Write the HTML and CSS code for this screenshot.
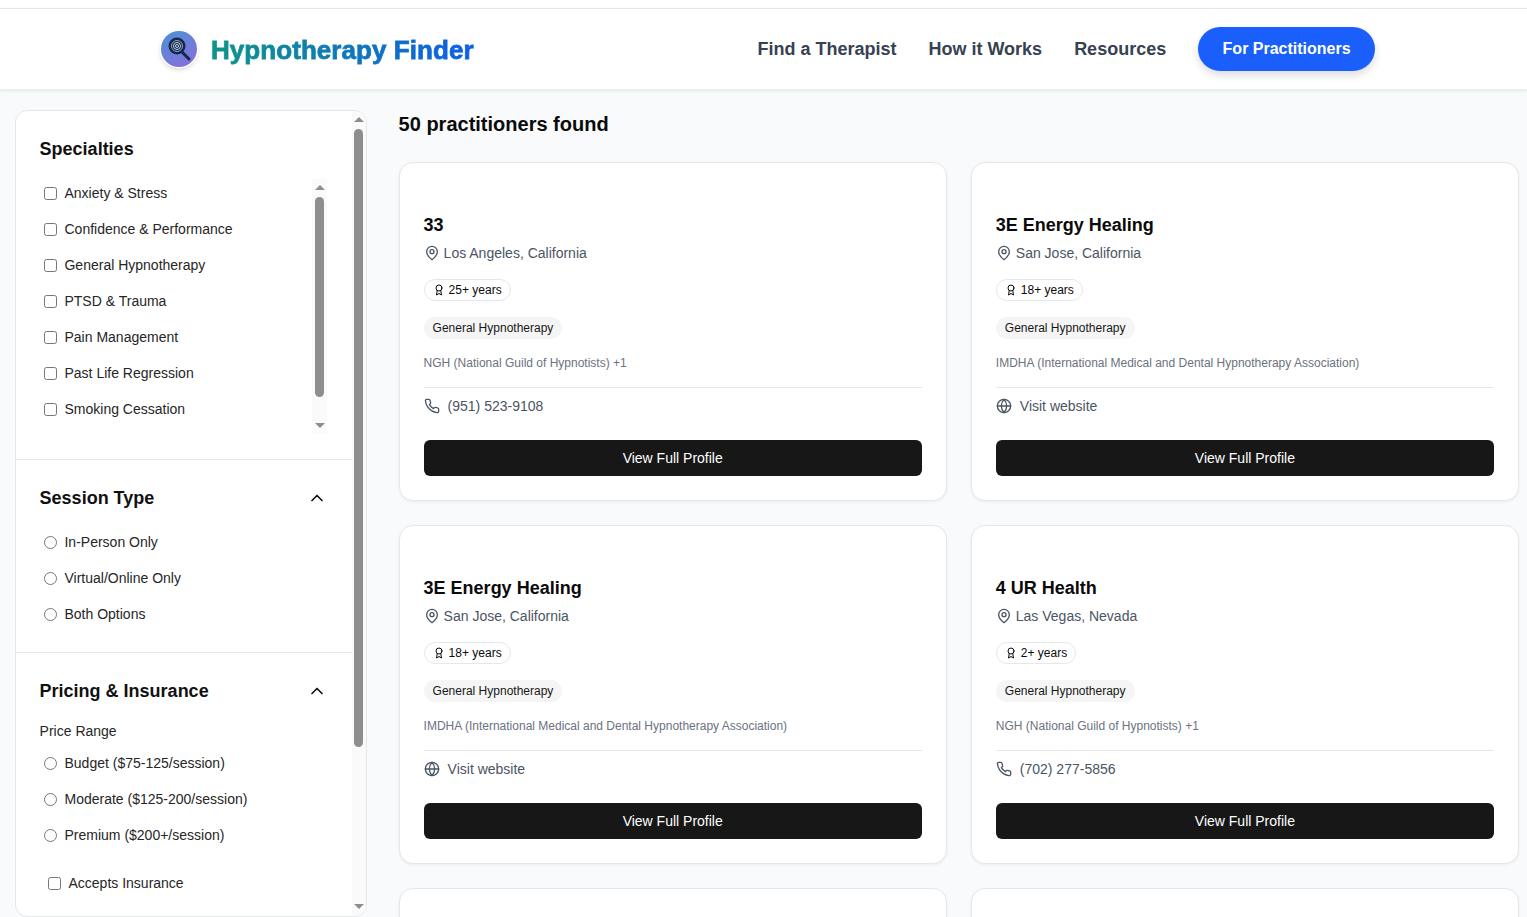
FILE: index.html
```html
<!DOCTYPE html>
<html lang="en">
<head>
    <meta charset="UTF-8">
    <meta name="viewport" content="width=device-width, initial-scale=1.0">
    <title>Hypnotherapy Finder</title>
    <link rel="stylesheet" href="styles.css">
</head>
<body>
    <svg class="icon-defs" width="0" height="0">
        <symbol id="i-pin" viewBox="0 0 24 24"><path d="M20 10c0 6-8 12-8 12s-8-6-8-12a8 8 0 0 1 16 0Z"/><circle cx="12" cy="10" r="3"/></symbol>
        <symbol id="i-award" viewBox="0 0 24 24"><circle cx="12" cy="8" r="6"/><path d="M15.477 12.89 17 22l-5-3-5 3 1.523-9.11"/></symbol>
        <symbol id="i-phone" viewBox="0 0 24 24"><path d="M22 16.92v3a2 2 0 0 1-2.18 2 19.79 19.79 0 0 1-8.63-3.07 19.5 19.5 0 0 1-6-6 19.79 19.79 0 0 1-3.07-8.67A2 2 0 0 1 4.11 2h3a2 2 0 0 1 2 1.72 12.84 12.84 0 0 0 .7 2.81 2 2 0 0 1-.45 2.11L8.09 9.91a16 16 0 0 0 6 6l1.27-1.27a2 2 0 0 1 2.11-.45 12.84 12.84 0 0 0 2.81.7A2 2 0 0 1 22 16.92z"/></symbol>
        <symbol id="i-globe" viewBox="0 0 24 24"><circle cx="12" cy="12" r="10"/><path d="M2 12h20"/><path d="M12 2a15.3 15.3 0 0 1 4 10 15.3 15.3 0 0 1-4 10 15.3 15.3 0 0 1-4-10 15.3 15.3 0 0 1 4-10z"/></symbol>
        <symbol id="i-chevron" viewBox="0 0 24 24"><path d="m18 15-6-6-6 6"/></symbol>
    </svg>

    <header class="site-header">
        <div class="header-inner">
            <a class="logo" href="#">
                <span class="logo-badge">
                    <svg viewBox="0 0 36 36" width="36" height="36">
                        <line x1="21" y1="21" x2="28" y2="28" stroke="#14284b" stroke-width="3" stroke-linecap="round"/>
                        <circle cx="16" cy="15" r="8.5" fill="#14284b"/>
                        <circle cx="16" cy="15" r="5.5" fill="none" stroke="#8fa6c8" stroke-width="1"/>
                        <circle cx="16" cy="15" r="3.5" fill="none" stroke="#c3d0e3" stroke-width="1"/>
                        <circle cx="16" cy="15" r="1.5" fill="none" stroke="#c3d0e3" stroke-width="1"/>
                    </svg>
                </span>
                <span class="logo-text">Hypnotherapy Finder</span>
            </a>
            <nav class="main-nav">
                <a href="#">Find a Therapist</a>
                <a href="#">How it Works</a>
                <a href="#">Resources</a>
                <a class="nav-cta" href="#">For Practitioners</a>
            </nav>
        </div>
    </header>

    <div class="page">
        <aside class="sidebar">
            <section class="filter-group">
                <div class="filter-head"><h3>Specialties</h3></div>
                <div class="specialty-list">
                    <label class="option"><input type="checkbox"> Anxiety &amp; Stress</label>
                    <label class="option"><input type="checkbox"> Confidence &amp; Performance</label>
                    <label class="option"><input type="checkbox"> General Hypnotherapy</label>
                    <label class="option"><input type="checkbox"> PTSD &amp; Trauma</label>
                    <label class="option"><input type="checkbox"> Pain Management</label>
                    <label class="option"><input type="checkbox"> Past Life Regression</label>
                    <label class="option"><input type="checkbox"> Smoking Cessation</label>
                    <div class="scrollbar scrollbar-inner">
                        <span class="arrow-up"></span>
                        <span class="thumb"></span>
                        <span class="arrow-down"></span>
                    </div>
                </div>
            </section>

            <section class="filter-group session-group">
                <div class="filter-head">
                    <h3>Session Type</h3>
                    <svg class="icon chevron"><use href="#i-chevron"/></svg>
                </div>
                <div class="option-list">
                    <label class="option"><input type="radio" name="session"> In-Person Only</label>
                    <label class="option"><input type="radio" name="session"> Virtual/Online Only</label>
                    <label class="option"><input type="radio" name="session"> Both Options</label>
                </div>
            </section>

            <section class="filter-group pricing-group">
                <div class="filter-head">
                    <h3>Pricing &amp; Insurance</h3>
                    <svg class="icon chevron"><use href="#i-chevron"/></svg>
                </div>
                <div class="price-label">Price Range</div>
                <label class="option"><input type="radio" name="price"> Budget ($75-125/session)</label>
                <label class="option"><input type="radio" name="price"> Moderate ($125-200/session)</label>
                <label class="option"><input type="radio" name="price"> Premium ($200+/session)</label>
                <label class="option insurance"><input type="checkbox"> Accepts Insurance</label>
            </section>

            <div class="scrollbar scrollbar-outer">
                <span class="arrow-up"></span>
                <span class="thumb"></span>
                <span class="arrow-down"></span>
            </div>
        </aside>

        <main class="results">
            <h2 class="results-count">50 practitioners found</h2>
            <div class="card-grid">
                <article class="card">
                    <h3 class="card-name">33</h3>
                    <div class="card-location"><svg class="icon"><use href="#i-pin"/></svg>Los Angeles, California</div>
                    <span class="badge"><svg class="icon"><use href="#i-award"/></svg>25+ years</span>
                    <div><span class="tag">General Hypnotherapy</span></div>
                    <p class="card-cert">NGH (National Guild of Hypnotists) +1</p>
                    <div class="card-contact"><svg class="icon"><use href="#i-phone"/></svg>(951) 523-9108</div>
                    <a class="profile-btn" href="#">View Full Profile</a>
                </article>
                <article class="card">
                    <h3 class="card-name">3E Energy Healing</h3>
                    <div class="card-location"><svg class="icon"><use href="#i-pin"/></svg>San Jose, California</div>
                    <span class="badge"><svg class="icon"><use href="#i-award"/></svg>18+ years</span>
                    <div><span class="tag">General Hypnotherapy</span></div>
                    <p class="card-cert">IMDHA (International Medical and Dental Hypnotherapy Association)</p>
                    <div class="card-contact"><svg class="icon"><use href="#i-globe"/></svg>Visit website</div>
                    <a class="profile-btn" href="#">View Full Profile</a>
                </article>
                <article class="card">
                    <h3 class="card-name">3E Energy Healing</h3>
                    <div class="card-location"><svg class="icon"><use href="#i-pin"/></svg>San Jose, California</div>
                    <span class="badge"><svg class="icon"><use href="#i-award"/></svg>18+ years</span>
                    <div><span class="tag">General Hypnotherapy</span></div>
                    <p class="card-cert">IMDHA (International Medical and Dental Hypnotherapy Association)</p>
                    <div class="card-contact"><svg class="icon"><use href="#i-globe"/></svg>Visit website</div>
                    <a class="profile-btn" href="#">View Full Profile</a>
                </article>
                <article class="card">
                    <h3 class="card-name">4 UR Health</h3>
                    <div class="card-location"><svg class="icon"><use href="#i-pin"/></svg>Las Vegas, Nevada</div>
                    <span class="badge"><svg class="icon"><use href="#i-award"/></svg>2+ years</span>
                    <div><span class="tag">General Hypnotherapy</span></div>
                    <p class="card-cert">NGH (National Guild of Hypnotists) +1</p>
                    <div class="card-contact"><svg class="icon"><use href="#i-phone"/></svg>(702) 277-5856</div>
                    <a class="profile-btn" href="#">View Full Profile</a>
                </article>
                <article class="card card-empty"></article>
                <article class="card card-empty"></article>
            </div>
        </main>
    </div>
</body>
</html>
```

FILE: styles.css
```css
* {
    box-sizing: border-box;
}

html,
body {
    height: 917px;
    overflow: hidden;
}

body {
    margin: 0;
    padding-top: 8px;
    background: #f9fafb;
    font-family: "Liberation Sans", Arial, sans-serif;
    color: #111;
    box-shadow: inset 0 8px 0 #fff;
}

a {
    text-decoration: none;
}

.icon-defs {
    position: absolute;
}

.icon {
    fill: none;
    stroke: currentColor;
    stroke-width: 2;
    stroke-linecap: round;
    stroke-linejoin: round;
    flex: none;
}

/* header */
.site-header {
    height: 82px;
    background: #fff;
    border-top: 1px solid #e5e7eb;
    border-bottom: 1px solid #dff3ee;
    box-shadow: 0 1px 3px rgba(0, 0, 0, 0.08);
}

.header-inner {
    display: flex;
    align-items: center;
    justify-content: space-between;
    height: 80px;
    padding: 0 152px 0 161px;
}

.logo {
    display: flex;
    align-items: center;
    gap: 14px;
}

.logo-badge {
    width: 36px;
    height: 36px;
    border-radius: 50%;
    overflow: hidden;
    background: linear-gradient(150deg, #4a93d6, #8c6bdc);
    box-shadow: 0 0 0 1.5px #fff, 0 2px 5px rgba(0, 0, 0, 0.22);
}

.logo-badge svg {
    display: block;
}

.logo-text {
    margin-top: 1px;
    font-size: 26px;
    font-weight: 700;
    line-height: 32px;
    letter-spacing: 0.06px;
    background: linear-gradient(90deg, #0d9488, #0f5ee8);
    -webkit-background-clip: text;
    background-clip: text;
    color: transparent;
    -webkit-text-stroke: 0.8px transparent;
}

.main-nav {
    display: flex;
    align-items: center;
    gap: 32px;
}

.main-nav a {
    font-size: 18px;
    font-weight: 700;
    color: #374151;
}

.main-nav .nav-cta {
    display: flex;
    align-items: center;
    height: 44px;
    padding: 0 24.4px;
    border-radius: 22px;
    background: #1a5ffb;
    color: #fff;
    font-size: 16px;
    box-shadow: 0 4px 8px rgba(0, 0, 0, 0.14);
}

/* layout */
.page {
    display: flex;
    align-items: flex-start;
    gap: 31.6px;
    padding: 20px 8px 0 15px;
}

/* sidebar */
.sidebar {
    position: relative;
    flex: none;
    width: 352px;
    height: 807px;
    overflow: hidden;
    background: #fff;
    border: 1px solid #e5e7eb;
    border-radius: 12px;
}

.filter-group {
    width: 336px;
    padding: 25px 24px 24px 23.6px;
    border-bottom: 1px solid #e5e7eb;
}

.session-group {
    padding-bottom: 20px;
}

.pricing-group {
    border-bottom: 0;
}

.filter-head {
    display: flex;
    align-items: center;
    justify-content: space-between;
    height: 27px;
}

.filter-head h3 {
    margin: 0;
    font-size: 18px;
    font-weight: 700;
    line-height: 27px;
    color: #111;
}

.chevron {
    width: 20px;
    height: 20px;
    margin-right: 1px;
    margin-bottom: 2px;
    color: #111;
}

.specialty-list {
    position: relative;
    height: 260px;
    margin-top: 12px;
}

.option-list {
    margin-top: 12px;
}

.option {
    display: flex;
    align-items: center;
    gap: 7.5px;
    height: 36px;
    padding-left: 4.4px;
    font-size: 14px;
    color: #262626;
}

.option input {
    flex: none;
    width: 13px;
    height: 13px;
    margin: 0;
}

.price-label {
    margin: 16px 0 3px;
    font-size: 14px;
    line-height: 21px;
    color: #262626;
}

.insurance {
    margin-top: 12px;
    padding-left: 8.4px;
}

/* scrollbars are drawn over the panel edge */
.scrollbar {
    position: absolute;
    display: flex;
    flex-direction: column;
    align-items: center;
    background: #fafafa;
}

.scrollbar-inner {
    top: 4px;
    right: 1px;
    width: 15px;
    height: 255px;
}

.scrollbar-outer {
    top: 0;
    right: 0;
    width: 14px;
    height: 805px;
    padding-right: 1px;
}

.thumb {
    width: 9px;
    margin-top: 7px;
    background: #8e8e8e;
    border-radius: 5px;
}

.scrollbar-inner .thumb {
    height: 200px;
}

.scrollbar-outer .thumb {
    height: 618px;
}

.arrow-up,
.arrow-down {
    width: 0;
    height: 0;
    border-left: 5px solid transparent;
    border-right: 5px solid transparent;
}

.arrow-up {
    margin-top: 6px;
    border-bottom: 5px solid #8e8e8e;
}

.arrow-down {
    margin-top: auto;
    margin-bottom: 6px;
    border-top: 5px solid #8e8e8e;
}

.scrollbar-outer .arrow-down {
    margin-bottom: 7px;
}

/* results */
.results {
    flex: 1;
    min-width: 0;
}

.results-count {
    margin: 0 0 24px;
    font-size: 20px;
    font-weight: 700;
    line-height: 28px;
    color: #0a0a0a;
}

.card-grid {
    display: grid;
    grid-template-columns: 1fr 1fr;
    gap: 24px;
}

.card {
    display: flex;
    flex-direction: column;
    align-items: flex-start;
    height: 339px;
    padding: 48px 24px 24px;
    background: #fff;
    border: 1px solid #e5e7eb;
    border-radius: 14px;
    box-shadow: 0 1px 3px rgba(0, 0, 0, 0.06);
}

.card-name {
    margin: 0;
    font-size: 18px;
    font-weight: 700;
    line-height: 28px;
    color: #0a0a0a;
}

.card-location {
    display: flex;
    align-items: center;
    gap: 4px;
    height: 20px;
    margin-top: 4px;
    font-size: 14px;
    color: #4b5563;
}

.card-location .icon {
    width: 16px;
    height: 16px;
}

.badge {
    display: inline-flex;
    align-items: center;
    gap: 4px;
    height: 22px;
    margin-top: 16px;
    padding: 0 8px;
    border: 1px solid #e5e7eb;
    border-radius: 11px;
    font-size: 12px;
    color: #0a0a0a;
}

.badge .icon {
    width: 12px;
    height: 12px;
}

.tag {
    display: inline-flex;
    align-items: center;
    height: 22px;
    margin-top: 16px;
    padding: 0 9px;
    background: #f5f5f5;
    border-radius: 11px;
    font-size: 12px;
    color: #171717;
}

.card-cert {
    margin: 16px 0 0;
    font-size: 12px;
    line-height: 16px;
    color: #6b7280;
}

.card-contact {
    display: flex;
    align-items: center;
    gap: 8px;
    width: 100%;
    height: 37px;
    margin-top: 16px;
    border-top: 1px solid #e5e7eb;
    font-size: 14px;
    color: #4b5563;
}

.card-contact .icon {
    width: 16px;
    height: 16px;
}

.profile-btn {
    display: flex;
    align-items: center;
    justify-content: center;
    width: 100%;
    height: 36px;
    margin-top: auto;
    background: #171717;
    border-radius: 6px;
    font-size: 14px;
    color: #fff;
}
```
